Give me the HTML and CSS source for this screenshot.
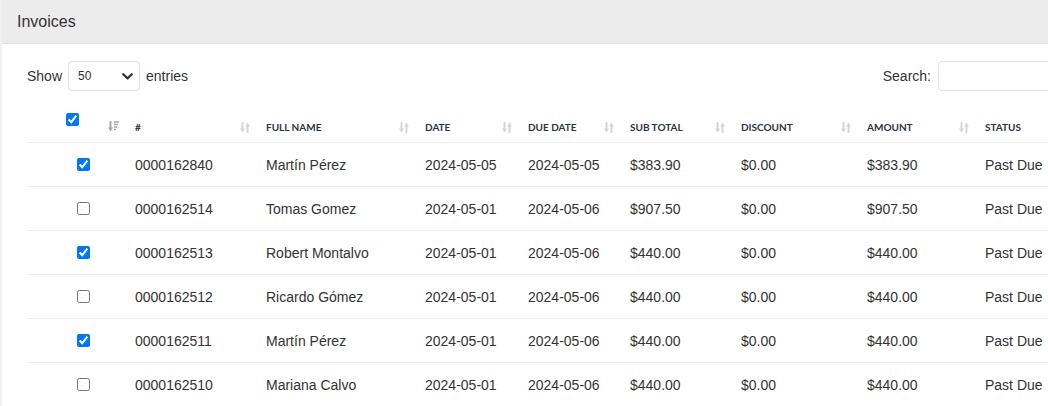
FILE: index.html
```html
<!DOCTYPE html>
<html lang="en">
<head>
<meta charset="utf-8">
<title>Invoices</title>
<link rel="stylesheet" href="styles.css">
</head>
<body>
<div class="card">
  <div class="card-header">Invoices</div>
  <div class="card-body">
    <div class="controls">
      <label class="length">Show
        <span class="select"><span class="select-value">50</span>
          <svg class="chev" width="11" height="7" viewBox="0 0 11 7"><path d="M1.2 1.2 L5.5 5.4 L9.8 1.2" fill="none" stroke="#333" stroke-width="2.2" stroke-linecap="round" stroke-linejoin="round"/></svg>
        </span>
        entries</label>
      <label class="search">Search: <span class="search-input"></span></label>
    </div>
    <table class="grid">
      <colgroup>
        <col class="c-check"><col class="c-num"><col class="c-name"><col class="c-date"><col class="c-due"><col class="c-sub"><col class="c-disc"><col class="c-amt"><col class="c-status">
      </colgroup>
      <thead>
        <tr>
          <th class="th-check"><div class="th-in"><input type="checkbox" checked><svg class="sort" width="11" height="11" viewBox="0 0 11 11"><path d="M2.5 0 V8" stroke="#a3a7ae" stroke-width="2"/><path d="M0 6.5 H5 L2.5 10.5 Z" fill="#a3a7ae"/><path d="M6 1 H11 M6 3.5 H10 M6 6 H9 M6 8.5 H8" stroke="#a3a7ae" stroke-width="1.4"/></svg></div></th>
          <th><div class="th-in"><span>#</span><svg class="sort" width="10" height="11" viewBox="0 0 10 11"><path d="M2.5 0 V8" stroke="#d3d6db" stroke-width="2"/><path d="M0 6.5 H5 L2.5 10.5 Z" fill="#d3d6db"/><path d="M7.5 3 V11" stroke="#d3d6db" stroke-width="2"/><path d="M5 4.5 H10 L7.5 0.5 Z" fill="#d3d6db"/></svg></div></th>
          <th><div class="th-in"><span>Full Name</span><svg class="sort" width="10" height="11" viewBox="0 0 10 11"><path d="M2.5 0 V8" stroke="#d3d6db" stroke-width="2"/><path d="M0 6.5 H5 L2.5 10.5 Z" fill="#d3d6db"/><path d="M7.5 3 V11" stroke="#d3d6db" stroke-width="2"/><path d="M5 4.5 H10 L7.5 0.5 Z" fill="#d3d6db"/></svg></div></th>
          <th><div class="th-in"><span>Date</span><svg class="sort" width="10" height="11" viewBox="0 0 10 11"><path d="M2.5 0 V8" stroke="#d3d6db" stroke-width="2"/><path d="M0 6.5 H5 L2.5 10.5 Z" fill="#d3d6db"/><path d="M7.5 3 V11" stroke="#d3d6db" stroke-width="2"/><path d="M5 4.5 H10 L7.5 0.5 Z" fill="#d3d6db"/></svg></div></th>
          <th><div class="th-in"><span>Due Date</span><svg class="sort" width="10" height="11" viewBox="0 0 10 11"><path d="M2.5 0 V8" stroke="#d3d6db" stroke-width="2"/><path d="M0 6.5 H5 L2.5 10.5 Z" fill="#d3d6db"/><path d="M7.5 3 V11" stroke="#d3d6db" stroke-width="2"/><path d="M5 4.5 H10 L7.5 0.5 Z" fill="#d3d6db"/></svg></div></th>
          <th><div class="th-in"><span>Sub Total</span><svg class="sort" width="10" height="11" viewBox="0 0 10 11"><path d="M2.5 0 V8" stroke="#d3d6db" stroke-width="2"/><path d="M0 6.5 H5 L2.5 10.5 Z" fill="#d3d6db"/><path d="M7.5 3 V11" stroke="#d3d6db" stroke-width="2"/><path d="M5 4.5 H10 L7.5 0.5 Z" fill="#d3d6db"/></svg></div></th>
          <th><div class="th-in"><span>Discount</span><svg class="sort" width="10" height="11" viewBox="0 0 10 11"><path d="M2.5 0 V8" stroke="#d3d6db" stroke-width="2"/><path d="M0 6.5 H5 L2.5 10.5 Z" fill="#d3d6db"/><path d="M7.5 3 V11" stroke="#d3d6db" stroke-width="2"/><path d="M5 4.5 H10 L7.5 0.5 Z" fill="#d3d6db"/></svg></div></th>
          <th><div class="th-in"><span>Amount</span><svg class="sort" width="10" height="11" viewBox="0 0 10 11"><path d="M2.5 0 V8" stroke="#d3d6db" stroke-width="2"/><path d="M0 6.5 H5 L2.5 10.5 Z" fill="#d3d6db"/><path d="M7.5 3 V11" stroke="#d3d6db" stroke-width="2"/><path d="M5 4.5 H10 L7.5 0.5 Z" fill="#d3d6db"/></svg></div></th>
          <th><div class="th-in"><span>Status</span><svg class="sort" width="10" height="11" viewBox="0 0 10 11"><path d="M2.5 0 V8" stroke="#d3d6db" stroke-width="2"/><path d="M0 6.5 H5 L2.5 10.5 Z" fill="#d3d6db"/><path d="M7.5 3 V11" stroke="#d3d6db" stroke-width="2"/><path d="M5 4.5 H10 L7.5 0.5 Z" fill="#d3d6db"/></svg></div></th>
        </tr>
      </thead>
      <tbody>
        <tr><td class="td-check"><input type="checkbox" checked></td><td>0000162840</td><td>Martín Pérez</td><td>2024-05-05</td><td>2024-05-05</td><td>$383.90</td><td>$0.00</td><td>$383.90</td><td>Past Due</td></tr>
        <tr><td class="td-check"><input type="checkbox"></td><td>0000162514</td><td>Tomas Gomez</td><td>2024-05-01</td><td>2024-05-06</td><td>$907.50</td><td>$0.00</td><td>$907.50</td><td>Past Due</td></tr>
        <tr><td class="td-check"><input type="checkbox" checked></td><td>0000162513</td><td>Robert Montalvo</td><td>2024-05-01</td><td>2024-05-06</td><td>$440.00</td><td>$0.00</td><td>$440.00</td><td>Past Due</td></tr>
        <tr><td class="td-check"><input type="checkbox"></td><td>0000162512</td><td>Ricardo Gómez</td><td>2024-05-01</td><td>2024-05-06</td><td>$440.00</td><td>$0.00</td><td>$440.00</td><td>Past Due</td></tr>
        <tr><td class="td-check"><input type="checkbox" checked></td><td>0000162511</td><td>Martín Pérez</td><td>2024-05-01</td><td>2024-05-06</td><td>$440.00</td><td>$0.00</td><td>$440.00</td><td>Past Due</td></tr>
        <tr><td class="td-check"><input type="checkbox"></td><td>0000162510</td><td>Mariana Calvo</td><td>2024-05-01</td><td>2024-05-06</td><td>$440.00</td><td>$0.00</td><td>$440.00</td><td>Past Due</td></tr>
      </tbody>
    </table>
  </div>
</div>
</body>
</html>
```

FILE: styles.css
```css
html, body {
  margin: 0;
  padding: 0;
  overflow: hidden;
}
body {
  background: #f0f0f6;
  padding-left: 2px;
  font-family: "Liberation Sans", Arial, sans-serif;
  color: #333;
}
.card {
  width: 1161px;
  background: #fff;
}
.card-header {
  height: 44px;
  box-sizing: border-box;
  background: #ececec;
  border-bottom: 1px solid #e2e2e2;
  padding: 13px 0 0 15px;
  font-size: 16px;
  line-height: 18px;
  color: #333;
}
.card-body {
  padding: 17px 25px 0 25px;
}
.controls {
  display: flex;
  justify-content: space-between;
  align-items: center;
  height: 30px;
  margin-bottom: 13px;
  font-size: 14px;
}
.length, .search {
  display: flex;
  align-items: center;
  gap: 6px;
}
.search { gap: 7px; }
.select {
  box-sizing: border-box;
  width: 72px;
  height: 30px;
  border: 1px solid #dde1ea;
  border-radius: 4px;
  display: flex;
  align-items: center;
  justify-content: space-between;
  padding: 0 6px 0 9px;
}
.select-value {
  font-size: 12px;
  color: #333;
}
.chev { display: block; }
.search-input {
  box-sizing: border-box;
  width: 200px;
  height: 30px;
  border: 1px solid #dde1ea;
  border-radius: 4px;
}
.grid {
  width: 100%;
  table-layout: fixed;
  border-collapse: collapse;
}
.c-check { width: 98px; }
.c-num { width: 131px; }
.c-name { width: 159px; }
.c-date { width: 103px; }
.c-due { width: 102px; }
.c-sub { width: 111px; }
.c-disc { width: 126px; }
.c-amt { width: 118px; }
.grid th {
  vertical-align: top;
  text-align: left;
  padding: 17px 6px 9px 10px;
  border-bottom: 1px solid #edeff2;
  font-family: Lato, "Liberation Sans", sans-serif;
  font-weight: 700;
  font-size: 10px;
  line-height: 12px;
  text-transform: uppercase;
  color: #2b3445;
}
.th-in {
  display: flex;
  justify-content: space-between;
  align-items: center;
  height: 12px;
}
.sort { display: block; flex: none; }
.grid th.th-check {
  padding: 9px 6px 0 39px;
}
.th-check .th-in {
  height: 29px;
  align-items: flex-start;
}
.th-check .sort { margin-top: 8px; }
.grid input[type="checkbox"] {
  display: block;
  margin: 0;
  width: 13px;
  height: 13px;
}
.grid td {
  height: 43px;
  padding: 0 10px;
  vertical-align: middle;
  border-bottom: 1px solid #edeff2;
  font-size: 14px;
  color: #333;
  white-space: nowrap;
}
.grid td.td-check {
  padding-left: 50px;
}
```
